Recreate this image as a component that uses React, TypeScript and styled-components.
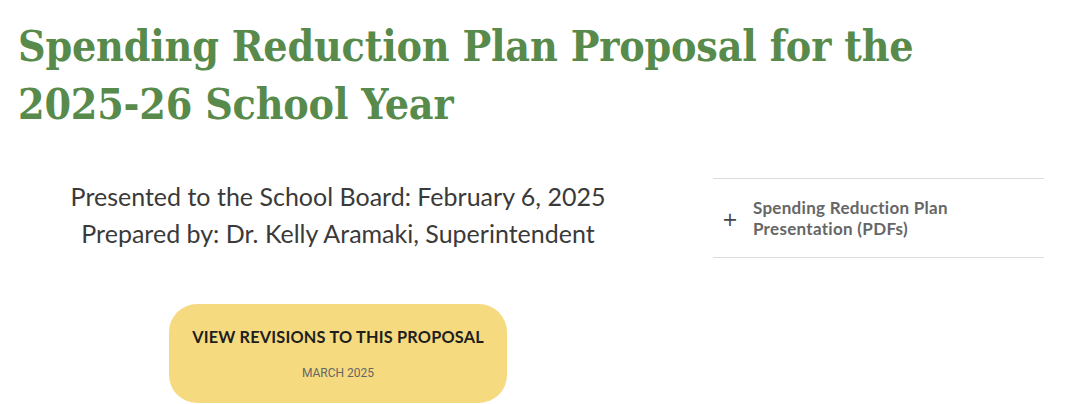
import React from "react";
import styled, { createGlobalStyle } from "styled-components";

const Global = createGlobalStyle`
  html, body { margin: 0; padding: 0; background: #fff; }
  body { font-family: "Lato", "Liberation Sans", sans-serif; }
`;

const Page = styled.div`
  width: 1080px;
  height: 404px;
  overflow: hidden;
  padding: 17px 0 0 18px;
  box-sizing: border-box;
`;

const Title = styled.h1`
  margin: 0;
  font-family: "DejaVu Serif", "Liberation Serif", serif;
  font-stretch: condensed;
  font-weight: 700;
  font-size: 42.5px;
  line-height: 58px;
  color: #578a4b;
  letter-spacing: -0.2px;
  width: 960px;
`;

const Columns = styled.div`
  display: grid;
  grid-template-columns: 640px 331px;
  column-gap: 55px;
  margin-top: 45px;
`;

const LeftCol = styled.div`
  display: flex;
  flex-direction: column;
  align-items: center;
`;

const Meta = styled.p`
  margin: 0;
  font-family: "Lato", sans-serif;
  font-size: 25px;
  line-height: 37px;
  color: #3a3a3a;
  text-align: center;
`;

const RevisionButton = styled.a`
  margin-top: 52px;
  width: 338px;
  height: 99px;
  box-sizing: border-box;
  background: #f5da80;
  border-radius: 28px;
  display: flex;
  flex-direction: column;
  align-items: center;
  padding-top: 23px;
  text-decoration: none;
  cursor: pointer;
`;

const ButtonLabel = styled.span`
  font-family: "Lato", sans-serif;
  font-weight: 700;
  font-size: 16.3px;
  letter-spacing: 0.2px;
  color: #1e1e1e;
  line-height: 20px;
`;

const ButtonDate = styled.span`
  margin-top: 19px;
  font-family: "Roboto", sans-serif;
  font-size: 12px;
  color: #666;
  line-height: 14px;
`;

const Accordion = styled.div`
  border-top: 1px solid #dcdcdc;
  border-bottom: 1px solid #dcdcdc;
  height: 80px;
  box-sizing: border-box;
  display: flex;
  align-items: center;
  gap: 15px;
  padding-left: 9px;
`;

const Plus = styled.span`
  font-family: "DejaVu Sans", sans-serif;
  font-size: 19px;
  color: #444;
  line-height: 18px;
  margin-top: 2px;
`;

const AccordionTitle = styled.span`
  font-family: "Lato", sans-serif;
  font-weight: 700;
  font-size: 17px;
  letter-spacing: 0.3px;
  line-height: 21px;
  color: #666;
`;

export default function App() {
  return (
    <>
      <Global />
      <Page>
        <Title>Spending Reduction Plan Proposal for the 2025-26 School Year</Title>
        <Columns>
          <LeftCol>
            <Meta>
              Presented to the School Board: February 6, 2025
              <br />
              Prepared by: Dr. Kelly Aramaki, Superintendent
            </Meta>
            <RevisionButton>
              <ButtonLabel>VIEW REVISIONS TO THIS PROPOSAL</ButtonLabel>
              <ButtonDate>MARCH 2025</ButtonDate>
            </RevisionButton>
          </LeftCol>
          <div>
            <Accordion>
              <Plus>+</Plus>
              <AccordionTitle>
                Spending Reduction Plan
                <br />
                Presentation (PDFs)
              </AccordionTitle>
            </Accordion>
          </div>
        </Columns>
      </Page>
    </>
  );
}
